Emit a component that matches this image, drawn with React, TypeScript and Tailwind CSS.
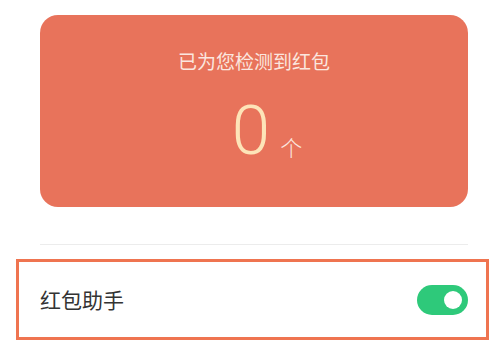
export default function App() {
  return (
    <div
      className="w-[500px] h-[350px] bg-white overflow-hidden"
      style={{ fontFamily: '"Noto Sans CJK SC", "Noto Sans", sans-serif' }}
    >
      {/* Red packet counter card */}
      <div className="ml-10 w-[428px] mt-[15px] h-[192px] rounded-[18px] bg-[#e8735b] flex flex-col items-center">
        <div className="mt-[34px] text-[19px] leading-[24px] text-[#fbe6df]">已为您检测到红包</div>
        <div className="mt-[23px] ml-[26px] flex items-end">
          <span className="font-['Roboto',sans-serif] font-light text-[69px] leading-[70px] text-[#fde4b8]">0</span>
          <span className="ml-[10px] mb-[8px] text-[22px] leading-[24px] font-light text-[#fbe6df]">个</span>
        </div>
      </div>

      <div className="ml-10 w-[428px] mt-[37px] h-px bg-[#ececec]" />

      {/* Highlighted setting row */}
      <div className="ml-4 w-[473px] mt-[14px] h-[81px] border-[3px] border-[#ef7450] flex items-center justify-between pl-[21px] pr-[18px]">
        <span className="text-[21px] text-[#333333]">红包助手</span>
        <div className="w-[51px] h-[30px] rounded-full bg-[#2ec97a] flex items-center justify-end pr-[6px]">
          <div className="w-[18px] h-[18px] rounded-full bg-white" />
        </div>
      </div>
    </div>
  );
}
